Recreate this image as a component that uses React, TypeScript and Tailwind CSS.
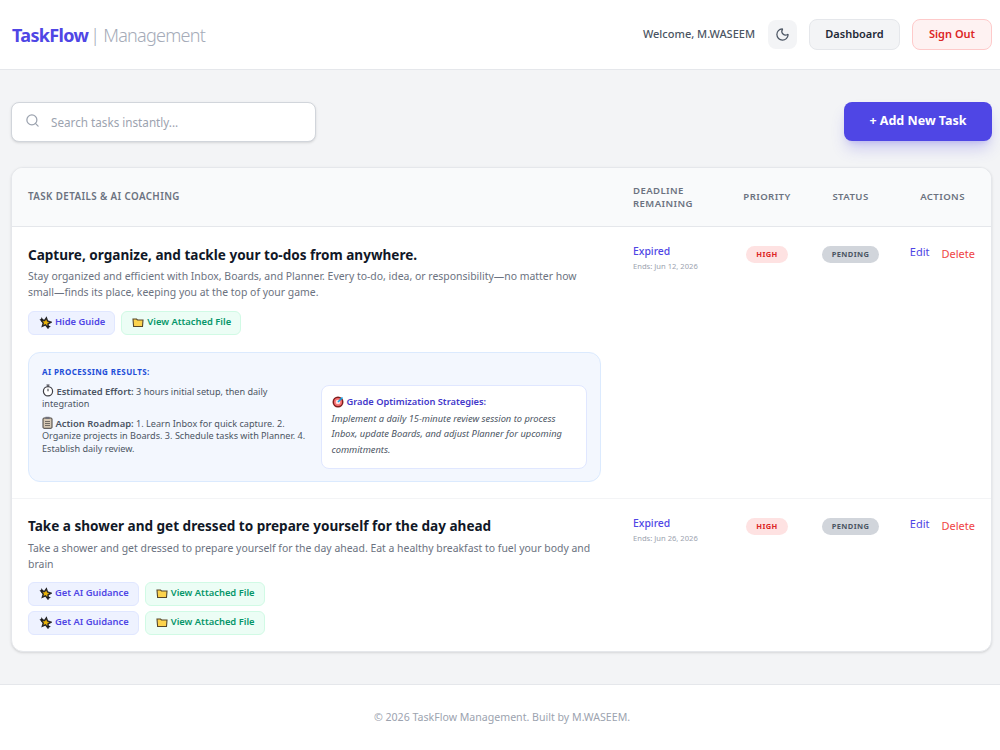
import { Moon, Search } from "lucide-react";

const font = "font-['Noto_Sans','Open_Sans',sans-serif]";

function SparkleIcon() {
  return (
    <svg width="13" height="13" viewBox="0 0 14 14" className="shrink-0">
      <path d="M8 2l1.2 3.4L13 6.6 9.8 8.4 9.4 12.6 7 9.6 3.6 11l1-3.4L2.6 5l3.4-.2z" fill="#eab308" stroke="#27272a" strokeWidth="1.5" />
      <path d="M3 1l.7 2 2 .7-2 .7-.7 2-.7-2-2-.7 2-.7z" fill="#18181b" />
      <path d="M10.5 9l.6 1.8 1.8.6-1.8.6-.6 1.8-.6-1.8-1.8-.6 1.8-.6z" fill="#18181b" />
    </svg>
  );
}

function FolderIcon() {
  return (
    <svg width="12" height="11" viewBox="0 0 12 11" className="shrink-0">
      <path d="M1 2h3.5l1 1H11l-.5 6.5H1.6z" fill="#fcd34d" stroke="#57472a" strokeWidth="1.1" />
    </svg>
  );
}

function TimerIcon() {
  return (
    <svg width="12" height="13" viewBox="0 0 12 13" className="inline-block align-[-2px]">
      <circle cx="6" cy="7.3" r="4.6" fill="#fff" stroke="#3f3f46" strokeWidth="1.2" />
      <path d="M4.5 1h3M6 1v1.6M6 7.3V4.8" stroke="#3f3f46" strokeWidth="1.1" fill="none" />
    </svg>
  );
}

function ClipboardIcon() {
  return (
    <svg width="11" height="13" viewBox="0 0 11 13" className="inline-block align-[-2px]">
      <rect x="1" y="2" width="9" height="10.3" rx="1" fill="#d6c8b4" stroke="#44403c" strokeWidth="1" />
      <rect x="3.4" y="0.8" width="4.2" height="2.2" fill="#71717a" />
      <path d="M3 5.5h5M3 7.5h5M3 9.5h5" stroke="#57534e" strokeWidth="0.8" />
    </svg>
  );
}

function TargetIcon() {
  return (
    <svg width="12" height="12" viewBox="0 0 12 12" className="shrink-0">
      <circle cx="6" cy="6" r="5.5" fill="#7f1d1d" />
      <circle cx="6" cy="6" r="4" fill="#f87171" />
      <circle cx="6" cy="6" r="2.3" fill="#fee2e2" />
      <path d="M6 6l4.5-4.5" stroke="#0ea5e9" strokeWidth="1.6" />
    </svg>
  );
}

function GuideButton({ label }: { label: string }) {
  return (
    <button className="flex h-6 items-center gap-[3px] rounded-md border border-[#e0e7ff] bg-[#eef2ff] pr-[9px] pl-[10px] text-[9.4px] font-semibold text-[#4f46e5]">
      <SparkleIcon />
      {label}
    </button>
  );
}

function FileButton() {
  return (
    <button className="flex h-6 items-center gap-[3px] rounded-md border border-[#d1fae5] bg-[#ecfdf5] pr-[9px] pl-[10px] text-[9.4px] font-semibold text-[#059669]">
      <FolderIcon />
      View Attached File
    </button>
  );
}

function TaskMeta({ ends }: { ends: string }) {
  return (
    <>
      <td className="pt-4 pl-4 align-top">
        <div className="text-[10.4px] leading-[17px] font-medium text-[#4f46e5]">Expired</div>
        <div className="mt-[1px] text-[7.6px] leading-[11px] text-[#9ca3af]">Ends: {ends}</div>
      </td>
      <td className="pt-3 text-center align-top">
        <span className="inline-block h-[17px] rounded-full bg-[#fee2e2] px-[10px] text-[7.5px] leading-[17px] font-bold tracking-[0.4px] text-[#dc2626]">HIGH</span>
      </td>
      <td className="pt-3 text-center align-top">
        <span className="inline-block h-[17px] rounded-full bg-[#d1d5db] px-[10px] text-[7.5px] leading-[17px] font-bold tracking-[0.4px] text-[#4b5563]">PENDING</span>
      </td>
      <td className="pt-[17px] pr-4 align-top">
        <div className="flex items-start justify-end gap-3 text-[11px] leading-[16px]">
          <a className="text-[#4f46e5]">Edit</a>
          <a className="mt-[2px] text-[#ef4444]">Delete</a>
        </div>
      </td>
    </>
  );
}

export default function App() {
  return (
    <div className={`flex min-h-[750px] flex-col bg-[#f3f4f6] ${font}`}>
      <header className="flex h-[70px] items-center justify-between border-b border-[#e5e7eb] bg-white pr-2 pl-3">
        <div className="flex items-center text-[18px] leading-none">
          <span className="font-bold tracking-[-0.65px] text-[#4f46e5]">TaskFlow</span>
          <span className="ml-[2px] font-light tracking-[-0.75px] text-[#a5abb8]">| Management</span>
        </div>
        <div className="flex items-center">
          <span className="text-[11px] font-medium text-[#4b5563]">Welcome, M.WASEEM</span>
          <button className="ml-[13px] flex size-[29px] items-center justify-center rounded-lg bg-[#f3f4f6] text-[#4b5563]">
            <Moon size={15} />
          </button>
          <button className="ml-3 h-[31px] w-[91px] rounded-lg border border-[#e5e7eb] bg-[#f3f4f6] text-[11px] font-semibold text-[#1f2937]">Dashboard</button>
          <button className="ml-3 h-[31px] w-[80px] rounded-lg border border-[#fecaca] bg-[#fef2f2] text-[11px] font-semibold text-[#dc2626]">Sign Out</button>
        </div>
      </header>

      <main className="flex-1 pt-8 pr-2 pb-8 pl-[11px]">
        <div className="flex items-start justify-between">
          <div className="flex h-10 w-[305px] items-center gap-[11px] rounded-lg border border-[#d1d5db] bg-white px-[13px] shadow-sm">
            <Search size={15} className="mt-[-3px] text-[#9ca3af]" />
            <span className="mt-[1px] text-[11.7px] text-[#9ca3af]">Search tasks instantly...</span>
          </div>
          <button className="h-[39px] w-[148px] rounded-lg bg-[#4f46e5] text-[12.5px] font-bold text-white shadow-lg shadow-[#4f46e5]/25">+ Add New Task</button>
        </div>

        <div className="mt-[25px] overflow-hidden rounded-xl border border-[#e5e7eb] bg-white shadow-sm">
          <table className="w-full table-fixed border-collapse">
            <colgroup>
              <col className="w-[605px]" />
              <col className="w-[108px]" />
              <col className="w-[84px]" />
              <col className="w-[83px]" />
              <col />
            </colgroup>
            <thead>
              <tr className="h-[58px] border-b border-[#e5e7eb] bg-[#f9fafb] text-[9.6px] leading-[13px] tracking-[0.4px] text-[#6b7280]">
                <th className="pl-4 text-left text-[9.8px] font-semibold">TASK DETAILS &amp; AI COACHING</th>
                <th className="pl-4 text-left font-semibold">DEADLINE<br />REMAINING</th>
                <th className="text-center font-semibold">PRIORITY</th>
                <th className="text-center font-semibold">STATUS</th>
                <th className="pl-[2px] text-center font-semibold">ACTIONS</th>
              </tr>
            </thead>
            <tbody>
              <tr className="h-[271px] border-b border-[#f3f4f6]">
                <td className="px-4 pt-[18px] align-top">
                  <h3 className="text-[13.55px] leading-[20px] font-bold text-[#111827]">Capture, organize, and tackle your to-dos from anywhere.</h3>
                  <p className="mt-[3px] text-[10.45px] leading-4 text-[#6b7280]">Stay organized and efficient with Inbox, Boards, and Planner. Every to-do, idea, or responsibility—no matter how small—finds its place, keeping you at the top of your game.</p>
                  <div className="mt-[11px] flex gap-[6px]">
                    <GuideButton label="Hide Guide" />
                    <FileButton />
                  </div>
                  <div className="mt-[17px] mb-4 grid h-[130px] grid-cols-2 gap-3 rounded-xl border border-[#dbeafe] bg-[#f3f7fe] px-[13px] pt-[13px]">
                    <div>
                      <div className="text-[8px] leading-[12px] font-bold tracking-[0.4px] text-[#1d4ed8]">AI PROCESSING RESULTS:</div>
                      <p className="mt-[6px] text-[9.1px] leading-[12px] text-[#4b5563]"><TimerIcon /> <b className="text-[9.45px] font-semibold">Estimated Effort:</b> 3 hours initial setup, then daily integration</p>
                      <p className="mt-[6px] text-[9.1px] leading-[12.5px] text-[#4b5563]"><ClipboardIcon /> <b className="text-[9.45px] font-semibold">Action Roadmap:</b> 1. Learn Inbox for quick capture. 2. Organize projects in Boards. 3. Schedule tasks with Planner. 4. Establish daily review.</p>
                    </div>
                    <div className="mt-[19px] h-[84px] rounded-lg border border-[#e0e7ff] bg-white px-[10px] pt-[9px]">
                      <div className="flex items-center gap-[3px] text-[9.3px] leading-[14px] font-semibold text-[#4338ca]"><TargetIcon />Grade Optimization Strategies:</div>
                      <p className="mt-[2px] text-[9.3px] leading-[15.5px] text-[#4b5563] italic">Implement a daily 15-minute review session to process Inbox, update Boards, and adjust Planner for upcoming commitments.</p>
                    </div>
                  </div>
                </td>
                <TaskMeta ends="Jun 12, 2026" />
              </tr>
              <tr className="h-[153px]">
                <td className="px-4 pt-[17px] align-top">
                  <h3 className="text-[13.55px] leading-[20px] font-bold text-[#111827]">Take a shower and get dressed to prepare yourself for the day ahead</h3>
                  <p className="mt-1 text-[10.45px] leading-4 text-[#6b7280]">Take a shower and get dressed to prepare yourself for the day ahead. Eat a healthy breakfast to fuel your body and brain</p>
                  <div className="mt-[10px] flex flex-col gap-[5px]">
                    <div className="flex gap-[6px]"><GuideButton label="Get AI Guidance" /><FileButton /></div>
                    <div className="flex gap-[6px]"><GuideButton label="Get AI Guidance" /><FileButton /></div>
                  </div>
                </td>
                <TaskMeta ends="Jun 26, 2026" />
              </tr>
            </tbody>
          </table>
        </div>
      </main>

      <footer className="flex h-[66px] items-center justify-center border-t border-[#e5e7eb] bg-white pl-1 text-[10.6px] text-[#9ca3af]">
        © 2026 TaskFlow Management. Built by M.WASEEM.
      </footer>
    </div>
  );
}
